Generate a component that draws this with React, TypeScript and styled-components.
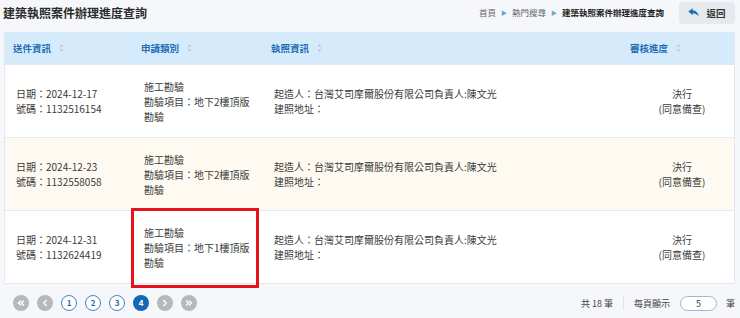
import styled, { createGlobalStyle } from "styled-components";
import { ChevronLeft, ChevronRight, ChevronsLeft, ChevronsRight } from "lucide-react";

const GlobalStyle = createGlobalStyle`
  html, body {
    margin: 0;
    padding: 0;
    background: #f5f7fb;
    font-family: "Noto Sans CJK TC", "Noto Sans", sans-serif;
    color: #333;
  }
`;

const Page = styled.div`
  width: 740px;
  height: 318px;
  padding: 0 5px 0 4px;
  box-sizing: border-box;
  overflow: hidden;
`;

const TopBar = styled.div`
  height: 24px;
  display: flex;
  align-items: center;
  justify-content: space-between;
  margin-bottom: 8px;
`;

const Title = styled.h1`
  margin: 0 0 0 -1px;
  font-size: 12px;
  font-weight: 700;
  color: #2b2b2b;
`;

const TopRight = styled.div`
  display: flex;
  align-items: center;
  gap: 15px;
`;

const Crumbs = styled.div`
  display: flex;
  align-items: center;
  gap: 5px;
  font-size: 8.5px;
  color: #666;
`;

const Crumb = styled.span<{ $current?: boolean }>`
  font-weight: ${(p) => (p.$current ? 700 : 400)};
  color: ${(p) => (p.$current ? "#222" : "#666")};
`;

const CrumbArrow = styled.span`
  color: #6aa6d8;
  font-size: 6px;
`;

const BackButton = styled.button`
  width: 56px;
  height: 22px;
  margin-top: 1px;
  border: none;
  border-radius: 4px;
  background: #e6e9ee;
  display: flex;
  align-items: center;
  justify-content: center;
  gap: 7px;
  font-family: inherit;
  font-size: 9.5px;
  font-weight: 700;
  color: #333;
  padding: 0;
`;

const Table = styled.div`
  border: 1px solid #e2e8f0;
  border-top: none;
  background: #fff;
`;

const Row = styled.div<{ $bg?: string; $head?: boolean }>`
  display: grid;
  grid-template-columns: 128px 130px 1fr 104px;
  background: ${(p) => p.$bg || "#fff"};
  height: ${(p) => (p.$head ? "32px" : "73px")};
  border-top: ${(p) => (p.$head ? "none" : "1px solid #e3e9f0")};
  box-sizing: border-box;
`;

const HeadCell = styled.div<{ $right?: boolean }>`
  display: flex;
  align-items: center;
  justify-content: ${(p) => (p.$right ? "flex-end" : "flex-start")};
  padding: ${(p) => (p.$right ? "0 53px 0 0" : "0 0 0 8px")};
  gap: 8px;
  font-size: 9.5px;
  font-weight: 700;
  color: #1f6db3;
`;

const Cell = styled.div<{ $center?: boolean }>`
  position: relative;
  display: flex;
  flex-direction: column;
  justify-content: center;
  align-items: ${(p) => (p.$center ? "center" : "flex-start")};
  text-align: ${(p) => (p.$center ? "center" : "left")};
  padding-left: ${(p) => (p.$center ? "0" : "11px")};
  font-size: 10px;
  line-height: 15px;
  color: #3a3a3a;
`;

const Highlight = styled.div`
  position: absolute;
  left: -2px;
  top: -3px;
  width: 128px;
  height: 80px;
  border: 3.5px solid #e3141b;
  box-sizing: border-box;
  pointer-events: none;
`;

const SortIcon = () => (
  <svg width="5" height="10" viewBox="0 0 5 10">
    <path d="M2.5 1 L4.5 3.5 L0.5 3.5 Z" fill="#b3c9dc" />
    <path d="M2.5 9 L4.5 6.5 L0.5 6.5 Z" fill="#b3c9dc" />
  </svg>
);

const Footer = styled.div`
  display: flex;
  align-items: center;
  justify-content: space-between;
  height: 38px;
  padding: 0 0 0 9px;
`;

const Pager = styled.div`
  display: flex;
  gap: 8px;
`;

const PageDot = styled.span<{ $kind: "nav" | "num" | "active" }>`
  width: 16px;
  height: 16px;
  border-radius: 50%;
  box-sizing: border-box;
  display: flex;
  align-items: center;
  justify-content: center;
  font-size: 8px;
  font-weight: 700;
  line-height: 1;
  background: ${(p) =>
    p.$kind === "nav" ? "#b5b8bc" : p.$kind === "active" ? "#1668b3" : "#fff"};
  color: ${(p) => (p.$kind === "num" ? "#1f6db3" : "#fff")};
  border: ${(p) => (p.$kind === "num" ? "1px solid #3a85c7" : "none")};
`;

const Summary = styled.div`
  display: flex;
  align-items: center;
  font-size: 9px;
  color: #444;
`;

const Divider = styled.span`
  width: 1px;
  height: 14px;
  background: #dde2e8;
  margin: 0 10px;
`;

const PageSize = styled.span`
  width: 37px;
  height: 15px;
  margin: 0 9px 0 10px;
  border: 1px solid #9fb6cc;
  border-radius: 8px;
  box-sizing: border-box;
  background: #fff;
  display: flex;
  align-items: center;
  justify-content: center;
  font-size: 9px;
  color: #333;
`;

const rows = [
  { date: "2024-12-17", no: "1132516154", floor: "地下2樓頂版", bg: "#fff" },
  { date: "2024-12-23", no: "1132558058", floor: "地下2樓頂版", bg: "#fefaf2" },
  {
    date: "2024-12-31",
    no: "1132624419",
    floor: "地下1樓頂版",
    bg: "#fff",
    marked: true,
  },
];

export default function App() {
  return (
    <>
      <GlobalStyle />
      <Page>
        <TopBar>
          <Title>建築執照案件辦理進度查詢</Title>
          <TopRight>
            <Crumbs>
              <Crumb>首頁</Crumb>
              <CrumbArrow>▶</CrumbArrow>
              <Crumb>熱門搜尋</Crumb>
              <CrumbArrow>▶</CrumbArrow>
              <Crumb $current>建築執照案件辦理進度查詢</Crumb>
            </Crumbs>
            <BackButton>
              <svg width="11" height="9" viewBox="0 0 11 9">
                <path
                  d="M0.3 3.6 L4.6 0.2 L4.6 2.2 C8 2.4 10.2 4.6 10.8 8.6 C9.4 6.4 7.6 5.3 4.6 5.2 L4.6 7.2 Z"
                  fill="#1f6db3"
                />
              </svg>
              返回
            </BackButton>
          </TopRight>
        </TopBar>

        <Table>
          <Row $head $bg="#d5ebfc">
            <HeadCell>
              送件資訊 <SortIcon />
            </HeadCell>
            <HeadCell>
              申請類別 <SortIcon />
            </HeadCell>
            <HeadCell>
              執照資訊 <SortIcon />
            </HeadCell>
            <HeadCell $right>
              審核進度 <SortIcon />
            </HeadCell>
          </Row>
          {rows.map((r) => (
            <Row key={r.no} $bg={r.bg}>
              <Cell>
                <div>日期：{r.date}</div>
                <div>號碼：{r.no}</div>
              </Cell>
              <Cell>
                <div>施工勘驗</div>
                <div>勘驗項目：{r.floor}</div>
                <div>勘驗</div>
                {r.marked && <Highlight />}
              </Cell>
              <Cell>
                <div>起造人：台灣艾司摩爾股份有限公司負責人:陳文光</div>
                <div>建照地址：</div>
              </Cell>
              <Cell $center>
                <div>決行</div>
                <div>(同意備查)</div>
              </Cell>
            </Row>
          ))}
        </Table>

        <Footer>
          <Pager>
            <PageDot $kind="nav">
              <ChevronsLeft size={10} strokeWidth={3.5} />
            </PageDot>
            <PageDot $kind="nav">
              <ChevronLeft size={10} strokeWidth={3.5} />
            </PageDot>
            <PageDot $kind="num">1</PageDot>
            <PageDot $kind="num">2</PageDot>
            <PageDot $kind="num">3</PageDot>
            <PageDot $kind="active">4</PageDot>
            <PageDot $kind="nav">
              <ChevronRight size={10} strokeWidth={3.5} />
            </PageDot>
            <PageDot $kind="nav">
              <ChevronsRight size={10} strokeWidth={3.5} />
            </PageDot>
          </Pager>
          <Summary>
            共 18 筆
            <Divider />
            每頁顯示
            <PageSize>5</PageSize>
            筆
          </Summary>
        </Footer>
      </Page>
    </>
  );
}
